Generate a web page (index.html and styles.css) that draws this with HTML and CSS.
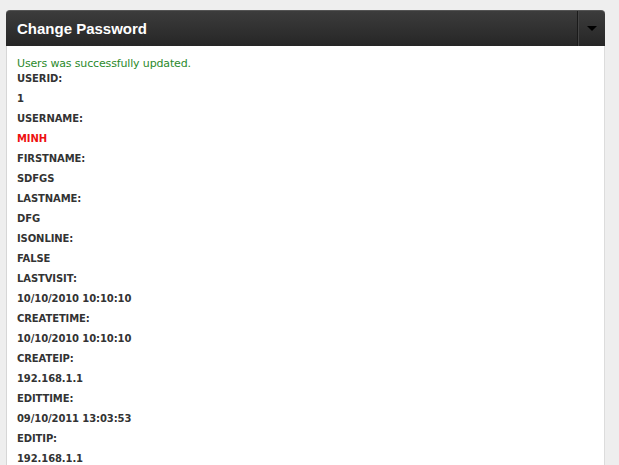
FILE: index.html
```html
<!DOCTYPE html>
<html>
<head>
<meta charset="utf-8">
<link rel="stylesheet" href="styles.css">
</head>
<body>
<div class="panel">
  <div class="panel-header">
    <h2 class="panel-title">Change Password</h2>
    <div class="panel-toggle"><span class="caret"></span></div>
  </div>
  <div class="panel-body">
    <div class="success">Users was successfully updated.</div>
    <dl class="fields">
      <dt>USERID:</dt><dd>1</dd>
      <dt>USERNAME:</dt><dd class="red">MINH</dd>
      <dt>FIRSTNAME:</dt><dd>SDFGS</dd>
      <dt>LASTNAME:</dt><dd>DFG</dd>
      <dt>ISONLINE:</dt><dd>FALSE</dd>
      <dt>LASTVISIT:</dt><dd>10/10/2010 10:10:10</dd>
      <dt>CREATETIME:</dt><dd>10/10/2010 10:10:10</dd>
      <dt>CREATEIP:</dt><dd>192.168.1.1</dd>
      <dt>EDITTIME:</dt><dd>09/10/2011 13:03:53</dd>
      <dt>EDITIP:</dt><dd>192.168.1.1</dd>
    </dl>
  </div>
</div>
</body>
</html>
```
FILE: styles.css
```css
html, body {
  margin: 0;
  padding: 0;
  background: #eeeeee;
  font-family: "DejaVu Sans", Verdana, sans-serif;
}
.panel {
  margin: 10px 0 0 6px;
  width: 599px;
}
.panel-header {
  display: flex;
  height: 36px;
  background: linear-gradient(#3c3c3c, #262626);
  border-radius: 4px 4px 0 0;
  border-top: 1px solid #555;
  box-sizing: border-box;
}
.panel-title {
  flex: 1;
  margin: 0;
  padding: 0 0 0 11px;
  color: #ffffff;
  font-family: "Liberation Sans", Arial, sans-serif;
  font-size: 15px;
  font-weight: bold;
  line-height: 35px;
}
.panel-toggle {
  width: 27px;
  border-left: 1px solid #1a1a1a;
  box-shadow: inset 1px 0 0 #444;
  display: flex;
  align-items: center;
  justify-content: center;
}
.caret {
  width: 0;
  height: 0;
  border-left: 5px solid transparent;
  border-right: 5px solid transparent;
  border-top: 5px solid #000;
}
.panel-body {
  background: #ffffff;
  border-left: 1px solid #d6d6d6;
  border-right: 1px solid #dcdcdc;
  padding: 12px 0 0 10px;
  height: 420px;
}
.success {
  color: #2b8a2b;
  font-size: 11px;
  line-height: 11px;
  letter-spacing: -0.15px;
}
.fields {
  margin: 0;
}
.fields dt, .fields dd {
  margin: 0;
  font-size: 10px;
  font-weight: bold;
  line-height: 20px;
  color: #333333;
  letter-spacing: -0.1px;
}
.fields dd.red {
  color: #ee1111;
}
```
